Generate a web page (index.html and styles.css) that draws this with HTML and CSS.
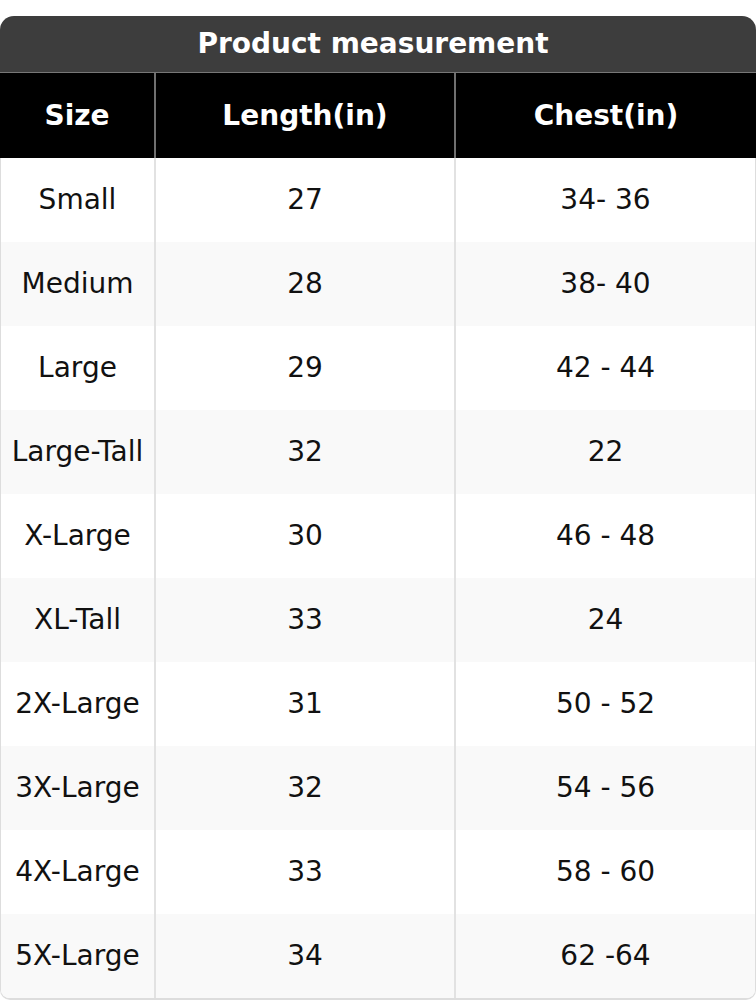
FILE: index.html
```html
<!DOCTYPE html>
<html>
<head>
<meta charset="utf-8">
<link rel="stylesheet" href="styles.css">
</head>
<body>
<div class="table">
  <div class="caption">Product measurement</div>
  <div class="row head">
    <div class="cell">Size</div>
    <div class="cell">Length(in)</div>
    <div class="cell">Chest(in)</div>
  </div>
  <div class="tbody">
    <div class="row"><div class="cell">Small</div><div class="cell">27</div><div class="cell">34- 36</div></div>
    <div class="row"><div class="cell">Medium</div><div class="cell">28</div><div class="cell">38- 40</div></div>
    <div class="row"><div class="cell">Large</div><div class="cell">29</div><div class="cell">42 - 44</div></div>
    <div class="row"><div class="cell">Large-Tall</div><div class="cell">32</div><div class="cell">22</div></div>
    <div class="row"><div class="cell">X-Large</div><div class="cell">30</div><div class="cell">46 - 48</div></div>
    <div class="row"><div class="cell">XL-Tall</div><div class="cell">33</div><div class="cell">24</div></div>
    <div class="row"><div class="cell">2X-Large</div><div class="cell">31</div><div class="cell">50 - 52</div></div>
    <div class="row"><div class="cell">3X-Large</div><div class="cell">32</div><div class="cell">54 - 56</div></div>
    <div class="row"><div class="cell">4X-Large</div><div class="cell">33</div><div class="cell">58 - 60</div></div>
    <div class="row"><div class="cell">5X-Large</div><div class="cell">34</div><div class="cell">62 -64</div></div>
  </div>
</div>
</body>
</html>
```
FILE: styles.css
```css
html, body {
  margin: 0;
  padding: 0;
  background: #ffffff;
}
body {
  font-family: "DejaVu Sans", sans-serif;
  font-size: 28px;
  color: #111111;
}
.table {
  width: 756px;
  margin-top: 16px;
}
.caption {
  height: 56px;
  line-height: 56px;
  padding-right: 10px;
  background: #3d3d3d;
  color: #ffffff;
  font-weight: bold;
  text-align: center;
  border-radius: 14px 14px 0 0;
  border-bottom: 1px solid #777777;
}
.row {
  display: grid;
  grid-template-columns: 154px 300px 1fr;
  height: 84px;
}
.cell {
  display: flex;
  align-items: center;
  justify-content: center;
  white-space: nowrap;
  padding-bottom: 2px;
}
.row .cell + .cell {
  border-left: 2px solid #e2e2e2;
}
.head {
  height: 85px;
  background: #000000;
  color: #ffffff;
  font-weight: bold;
}
.head .cell {
  padding-bottom: 0;
}
.head .cell + .cell {
  border-left: 2px solid #707070;
}
.tbody {
  border: 1px solid #dddddd;
  border-top: none;
  border-bottom-width: 2px;
  border-radius: 0 0 10px 10px;
  overflow: hidden;
}
.tbody .row {
  grid-template-columns: 153px 300px 1fr;
}
.tbody .row:nth-child(even) {
  background: #f9f9f9;
}
```
